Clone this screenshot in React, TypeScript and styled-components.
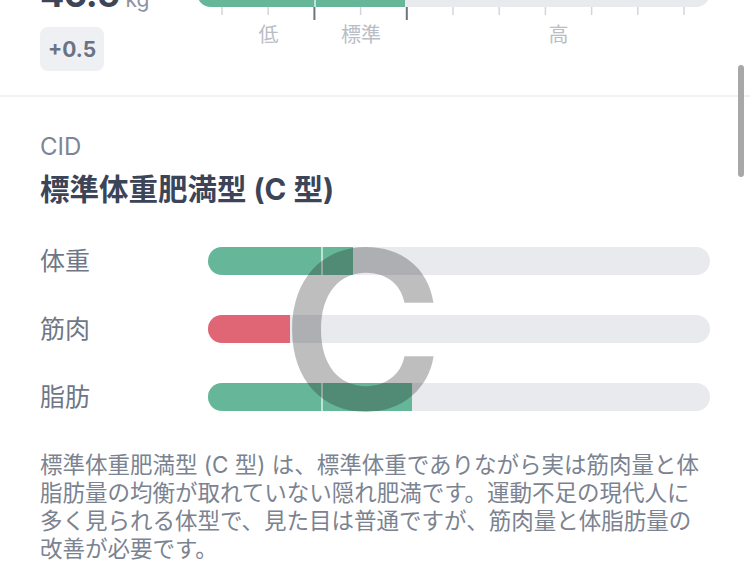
import React from "react";
import styled, { createGlobalStyle } from "styled-components";

const Global = createGlobalStyle`
  html, body { margin: 0; padding: 0; background: #fff; overflow: hidden; }
  body { font-family: Inter, "Noto Sans CJK JP", sans-serif; -webkit-font-smoothing: antialiased; }
`;

const Page = styled.div`
  position: relative;
  width: 750px;
  height: 583px;
  overflow: hidden;
  background: #fff;
`;

const Summary = styled.section`
  display: grid;
  grid-template-columns: 157px 513px;
  padding: 0 40px;
  margin-top: -21px;
  height: 116px;
  border-bottom: 2px solid #f2f2f4;
`;

const WeightCol = styled.div`
  display: flex;
  flex-direction: column;
  align-items: flex-start;
`;

const WeightRow = styled.div`
  display: flex;
  align-items: baseline;
  gap: 6px;
  margin-top: -3px;
  line-height: 1;
`;

const WeightValue = styled.span`
  font-size: 36px;
  font-weight: 700;
  color: #3d4557;
  letter-spacing: -0.5px;
`;

const WeightUnit = styled.span`
  font-size: 21px;
  color: #8c939f;
`;

const DiffBadge = styled.div`
  margin-top: 15px;
  height: 44px;
  padding: 0 8px;
  display: flex;
  align-items: center;
  border-radius: 8px;
  background: #eff0f4;
  color: #6b7383;
  font-size: 21px;
  font-weight: 700;
`;

const ScaleCol = styled.div`
  display: flex;
  flex-direction: column;
`;

const Track = styled.div`
  position: relative;
  height: 28px;
  border-radius: 14px;
  background: #e9eaee;
  overflow: hidden;
`;

const Fill = styled.div<{ $color: string }>`
  position: relative;
  height: 100%;
  background: ${(p) => p.$color};
`;

const Divider = styled.div`
  position: absolute;
  top: 0;
  bottom: 0;
  width: 2px;
  background: rgba(255, 255, 255, 0.6);
`;

const ScaleLabels = styled.div`
  display: flex;
  padding-left: 25px;
  margin-top: 4px;
`;

const ScaleLabel = styled.span<{ $w: number }>`
  width: ${(p) => p.$w}px;
  text-align: center;
  font-size: 20px;
  line-height: 22px;
  color: #b9bdc5;
`;

const TypeSection = styled.section`
  padding: 35px 40px 0 40px;
`;

const Kicker = styled.div`
  font-size: 24px;
  line-height: 29px;
  color: #7d8594;
`;

const Title = styled.h2`
  margin: 11px 0 0;
  font-size: 29.5px;
  line-height: 35px;
  font-weight: 700;
  color: #3c4457;
`;

const Rows = styled.div`
  position: relative;
  margin-top: 40px;
  display: grid;
  grid-template-columns: 168px 1fr;
  grid-auto-rows: 28px;
  row-gap: 40px;
  align-items: center;
`;

const RowLabel = styled.div`
  font-size: 25px;
  line-height: 28px;
  color: #6f7787;
`;

const TypeLetter = styled.div`
  position: absolute;
  top: 0;
  bottom: 0;
  left: 241px;
  display: flex;
  align-items: center;
  font-family: Inter, sans-serif;
  font-size: 221px;
  font-weight: 600;
  line-height: 1;
  color: rgba(30, 32, 36, 0.29);
  pointer-events: none;
`;

const Description = styled.p`
  margin: 40px 0 0;
  font-size: 22.5px;
  line-height: 28px;
  color: #7b8391;
`;

const Scrollbar = styled.div`
  position: absolute;
  right: 6px;
  top: 65px;
  width: 6px;
  height: 112px;
  border-radius: 3px;
  background: #a8a8a8;
`;

const ticks = Array.from({ length: 11 }, (_, i) => 25 + 46.2 * i);

const Ticks = () => (
  <svg width="513" height="13" viewBox="0 0 513 13" style={{ display: "block" }}>
    {ticks.map((x, i) =>
      i === 2 || i === 4 ? (
        <line key={i} x1={x} x2={x} y1={0} y2={13} stroke="#6d7482" strokeWidth={2} />
      ) : (
        <line key={i} x1={x} x2={x} y1={0} y2={8} stroke="#d3d5da" strokeWidth={1.5} />
      )
    )}
  </svg>
);

const GREEN = "#66b799";
const RED = "#e06676";

const rows = [
  { label: "体重", width: 145, color: GREEN, divider: true },
  { label: "筋肉", width: 82, color: RED, divider: false },
  { label: "脂肪", width: 204, color: GREEN, divider: true },
];

export default function App() {
  return (
    <Page>
      <Global />
      <Summary>
        <WeightCol>
          <WeightRow>
            <WeightValue>46.5</WeightValue>
            <WeightUnit>kg</WeightUnit>
          </WeightRow>
          <DiffBadge>+0.5</DiffBadge>
        </WeightCol>
        <ScaleCol>
          <Track>
            <Fill $color={GREEN} style={{ width: 208 }}>
              <Divider style={{ left: 117 }} />
            </Fill>
          </Track>
          <Ticks />
          <ScaleLabels>
            <ScaleLabel $w={93}>低</ScaleLabel>
            <ScaleLabel $w={92}>標準</ScaleLabel>
            <ScaleLabel $w={303}>高</ScaleLabel>
          </ScaleLabels>
        </ScaleCol>
      </Summary>
      <TypeSection>
        <Kicker>CID</Kicker>
        <Title>標準体重肥満型 (C 型)</Title>
        <Rows>
          {rows.map((r) => (
            <React.Fragment key={r.label}>
              <RowLabel>{r.label}</RowLabel>
              <Track>
                <Fill $color={r.color} style={{ width: r.width }}>
                  {r.divider && <Divider style={{ left: 113 }} />}
                </Fill>
              </Track>
            </React.Fragment>
          ))}
          <TypeLetter>C</TypeLetter>
        </Rows>
        <Description>
          標準体重肥満型 (C 型) は、標準体重でありながら実は筋肉量と体脂肪量の均衡が取れていない隠れ肥満です。運動不足の現代人に多く見られる体型で、見た目は普通ですが、筋肉量と体脂肪量の改善が必要です。
        </Description>
      </TypeSection>
      <Scrollbar />
    </Page>
  );
}
